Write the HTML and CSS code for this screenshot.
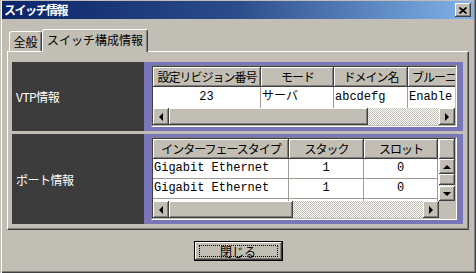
FILE: index.html
```html
<!DOCTYPE html>
<html lang="ja">
<head>
  <meta charset="UTF-8" />
  <title>スイッチ情報</title>
  <link rel="stylesheet" href="styles.css">
</head>
<body>
  <div class="window">
    <div class="titlebar">
      <span class="title">スイッチ情報</span>
      <span class="close-btn">
        <svg width="8" height="7" viewBox="0 0 8 7"><path d="M0.5 0.5 L7.5 6.5 M7.5 0.5 L0.5 6.5" stroke="#000" stroke-width="1.7" fill="none"/></svg>
      </span>
    </div>

    <div class="client">
      <div class="tabs">
        <div class="tab">全般</div>
        <div class="tab active">スイッチ構成情報</div>
      </div>

      <div class="panel">
        <div class="section vtp">
          <div class="label">VTP情報</div>
          <div class="well">
            <div class="list">
              <div class="list-inner vtp-grid">
                <div class="row head vtp-cols">
                  <div class="th">設定リビジョン番号</div>
                  <div class="th">モード</div>
                  <div class="th">ドメイン名</div>
                  <div class="th">ブルーニング</div>
                </div>
                <div class="row vtp-cols body">
                  <div class="td center">23</div>
                  <div class="td">サーバ</div>
                  <div class="td">abcdefg</div>
                  <div class="td">Enable</div>
                </div>
                <div class="hscroll">
                  <div class="sb-btn"><i class="arr-left"></i></div>
                  <div class="thumb vtp-thumb"></div>
                  <div class="track"></div>
                  <div class="sb-btn"><i class="arr-right"></i></div>
                </div>
              </div>
            </div>
          </div>
        </div>

        <div class="section port">
          <div class="label">ポート情報</div>
          <div class="well">
            <div class="list">
              <div class="list-inner port-grid">
                <div class="row head port-cols">
                  <div class="th">インターフェースタイプ</div>
                  <div class="th">スタック</div>
                  <div class="th">スロット</div>
                </div>
                <div class="th blank"></div>
                <div class="rows port-cols">
                  <div class="td line">Gigabit Ethernet</div>
                  <div class="td line center">1</div>
                  <div class="td line center">0</div>
                  <div class="td line">Gigabit Ethernet</div>
                  <div class="td line center">1</div>
                  <div class="td line center">0</div>
                  <div class="td"></div>
                  <div class="td"></div>
                  <div class="td"></div>
                </div>
                <div class="vscroll">
                  <div class="sb-btn v"><i class="arr-up"></i></div>
                  <div class="thumb v-thumb"></div>
                  <div class="track"></div>
                  <div class="sb-btn v"><i class="arr-down"></i></div>
                </div>
                <div class="hscroll">
                  <div class="sb-btn"><i class="arr-left"></i></div>
                  <div class="thumb port-thumb"></div>
                  <div class="track"></div>
                  <div class="sb-btn"><i class="arr-right"></i></div>
                </div>
                <div class="corner"></div>
              </div>
            </div>
          </div>
        </div>
      </div>

      <div class="footer">
        <button class="btn"><span class="focus">閉じる</span></button>
      </div>
    </div>
  </div>
</body>
</html>
```

FILE: styles.css
```css
body {
  margin: 0;
  background: #c2beb3;
  font-family: "Noto Sans CJK JP", sans-serif;
  font-size: 12px;
  color: #000;
}
.window {
  width: 476px;
  height: 273px;
  box-sizing: border-box;
  padding: 1px 2px 0 2px;
  background: #c2beb3;
  box-shadow: inset 1px 0 #c2beb3, inset 2px 0 #fff, inset -1px -1px #404040, inset -2px -2px #808080;
}
.titlebar {
  height: 18px;
  display: flex;
  align-items: center;
  justify-content: space-between;
  padding: 0 3px 0 2px;
  background: linear-gradient(to right, #0a246a 0%, #2b4d8c 50%, #82b3ea 100%);
}
.title {
  color: #fff;
  font-weight: bold;
  font-size: 12px;
  line-height: 18px;
  letter-spacing: -1.5px;
}
.close-btn {
  width: 16px;
  height: 14px;
  display: flex;
  align-items: center;
  justify-content: center;
  background: #c2beb3;
  box-shadow: inset -1px -1px #404040, inset 1px 1px #fff, inset -2px -2px #808080;
}
.client {
  padding: 10px 5px 0 5px;
}

/* tabs */
.tabs {
  display: flex;
  align-items: flex-end;
  height: 23px;
  padding-left: 2px;
  margin-bottom: -1px;
  position: relative;
  z-index: 1;
}
.tab {
  box-sizing: border-box;
  width: 33px;
  height: 20px;
  margin-bottom: 1px;
  border: 1px solid;
  border-color: #fff #404040 transparent #fff;
  border-bottom: none;
  border-radius: 3px 3px 0 0;
  box-shadow: inset -1px 0 #808080;
  background: #c2beb3;
  text-align: center;
  line-height: 19px;
}
.tab.active {
  width: 106px;
  height: 23px;
  margin-bottom: 0;
  line-height: 20px;
}

/* panel */
.panel {
  box-sizing: border-box;
  height: 179px;
  padding: 10px 5px 4px 4px;
  border: 1px solid;
  border-color: #fff #404040 #404040 #fff;
  box-shadow: inset -1px -1px #808080;
  display: flex;
  flex-direction: column;
  gap: 3px;
}
.section {
  display: grid;
  grid-template-columns: 132px 1fr;
  grid-template-rows: minmax(0, 1fr);
  min-height: 0;
  flex: none;
}
.vtp { height: 69px; }
.port { height: 90px; }
.label {
  background: #3c3c3c;
  color: #fff;
  display: flex;
  align-items: center;
  padding-left: 4px;
  letter-spacing: -0.5px;
}
.well {
  background: #7876b8;
  padding: 3px 6px 4px 7px;
  display: flex;
  min-height: 0;
}
.list {
  flex: 1;
  display: flex;
  min-height: 0;
  border: 1px solid;
  border-color: #808080 #fff #fff #808080;
}
.list-inner {
  flex: 1;
  min-height: 0;
  border: 1px solid;
  border-color: #404040 #c2beb3 #c2beb3 #404040;
  background: #fff;
  overflow: hidden;
  display: grid;
}
.vtp-grid {
  grid-template-rows: 20px minmax(0, 1fr) 17px;
}
.port-grid {
  grid-template-columns: minmax(0, 1fr) 16px;
  grid-template-rows: 20px minmax(0, 1fr) 17px;
}
.row, .rows {
  display: grid;
  overflow: hidden;
  min-height: 0;
}
.vtp-cols { grid-template-columns: 108px 73px 74px 74px; }
.port-cols { grid-template-columns: 136px 75px 74px; }
.rows { grid-auto-rows: 20px; }
.th {
  background: #c2beb3;
  box-shadow: inset -1px -1px #404040, inset 1px 1px #fff, inset -2px -2px #808080;
  text-align: center;
  line-height: 20px;
  letter-spacing: -1px;
  white-space: nowrap;
  overflow: hidden;
}
.td {
  box-sizing: border-box;
  border-right: 1px solid #a09c94;
  font-family: "Liberation Mono", "Noto Sans CJK JP", monospace;
  font-size: 12px;
  line-height: 19px;
  padding-left: 1px;
  white-space: nowrap;
  overflow: hidden;
}
.body .td { line-height: 21px; }
.td.line { border-bottom: 1px solid #a09c94; }
.td.center { text-align: center; padding-left: 0; }

/* scrollbars */
.hscroll {
  display: flex;
  background: #c2beb3;
}
.vscroll {
  display: flex;
  flex-direction: column;
  min-height: 0;
}
.sb-btn {
  width: 16px;
  flex: none;
  display: flex;
  align-items: center;
  justify-content: center;
  background: #c2beb3;
  box-shadow: inset -1px -1px #404040, inset 1px 1px #fff, inset -2px -2px #808080;
}
.sb-btn.v {
  width: auto;
  height: 15px;
}
.thumb {
  flex: none;
  background: #c2beb3;
  box-shadow: inset -1px -1px #404040, inset 1px 1px #fff, inset -2px -2px #808080;
}
.vtp-thumb { width: 199px; }
.port-thumb { width: 124px; }
.v-thumb { height: 11px; }
.track {
  flex: 1;
  background: repeating-conic-gradient(#fff 0 25%, #c2beb3 0 50%) 0 0 / 2px 2px;
}
.corner { background: #c2beb3; }
.arr-left, .arr-right, .arr-up, .arr-down {
  width: 0;
  height: 0;
}
.arr-left {
  border-top: 4px solid transparent;
  border-bottom: 4px solid transparent;
  border-right: 4px solid #000;
}
.arr-right {
  border-top: 4px solid transparent;
  border-bottom: 4px solid transparent;
  border-left: 4px solid #000;
}
.arr-up {
  border-left: 4px solid transparent;
  border-right: 4px solid transparent;
  border-bottom: 4px solid #000;
}
.arr-down {
  border-left: 4px solid transparent;
  border-right: 4px solid transparent;
  border-top: 4px solid #000;
}

/* footer */
.footer {
  display: flex;
  justify-content: center;
  padding-top: 11px;
}
.btn {
  width: 89px;
  height: 20px;
  padding: 3px 4px;
  border: 1px solid #000;
  background: #c2beb3;
  box-shadow: inset -1px -1px #404040, inset 1px 1px #fff, inset -2px -2px #808080;
  font-family: "Noto Sans CJK JP", sans-serif;
  font-size: 12px;
  display: flex;
}
.focus {
  flex: 1;
  border: 1px dotted #000;
  line-height: 11px;
  text-align: center;
}
```
